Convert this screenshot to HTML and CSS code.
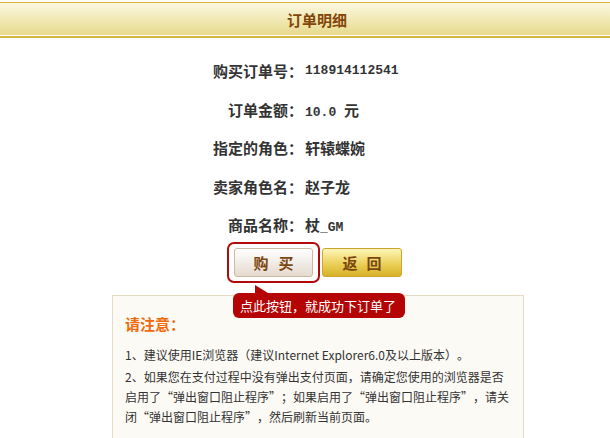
FILE: index.html
```html
<!DOCTYPE html>
<html lang="zh-CN">
<head>
<meta charset="utf-8">
<title>订单明细</title>
<link rel="stylesheet" href="styles.css">
</head>
<body>
<div class="header"><span class="title">订单明细</span></div>

<div class="details">
  <div class="label">购买订单号：</div><div class="value mono">118914112541</div>
  <div class="label">订单金额：</div><div class="value"><span class="mono">10.0 </span>元</div>
  <div class="label">指定的角色：</div><div class="value">轩辕蝶婉</div>
  <div class="label">卖家角色名：</div><div class="value">赵子龙</div>
  <div class="label">商品名称：</div><div class="value">杖<span class="mono">_GM</span></div>
</div>

<div class="actions">
  <div class="buy-wrap">
    <button class="btn btn-buy">购买</button>
    <div class="tip"><span class="tip-arrow"></span>点此按钮，就成功下订单了</div>
  </div>
  <button class="btn btn-back">返回</button>
</div>

<div class="notice">
  <div class="notice-title">请注意：</div>
  <p class="first">1、建议使用IE浏览器（建议Internet Explorer6.0及以上版本）。</p>
  <p>2、如果您在支付过程中没有弹出支付页面，请确定您使用的浏览器是否启用了<span class="qo">“</span>弹出窗口阻止程序<span class="qc">”</span>；如果启用了<span class="qo">“</span>弹出窗口阻止程序<span class="qc">”</span>，请关闭<span class="qo">“</span>弹出窗口阻止程序<span class="qc">”</span>，然后刷新当前页面。</p>
</div>
</body>
</html>
```

FILE: styles.css
```css
html, body {
  margin: 0;
  padding: 0;
  background: #ffffff;
}
body {
  font-family: "Noto Sans CJK SC", "Liberation Sans", sans-serif;
  color: #333333;
  overflow: hidden;
  text-spacing-trim: space-all;
}

.header {
  margin-top: 2px;
  border-top: 1px solid #d6b73c;
  border-bottom: 2px solid #d6b73c;
  padding-bottom: 1px;
  height: 32px;
  line-height: 32px;
  text-align: center;
  background: linear-gradient(#fbf8e0, #e7da8c) content-box;
}
.title {
  margin-left: 24px;
  font-size: 15px;
  font-weight: bold;
  color: #834608;
}

.details {
  margin-top: 13.5px;
  display: grid;
  grid-template-columns: 303px auto;
  column-gap: 2px;
  grid-auto-rows: 38.5px;
  align-items: center;
  font-size: 15px;
  font-weight: bold;
}
.label {
  text-align: right;
  color: #333333;
}
.value {
  color: #333333;
}
.mono {
  font-family: "Liberation Mono", monospace;
  font-size: 13px;
}

.actions {
  margin-top: -2px;
  padding-left: 227px;
  display: flex;
  align-items: center;
  gap: 2px;
}
.buy-wrap {
  position: relative;
  border: 2px solid #b20a0a;
  border-radius: 7px;
  padding: 4px 5px;
  background: #ffffff;
}
.btn {
  display: block;
  height: 29px;
  margin: 0;
  padding: 0 0 0 10px;
  font-family: "Noto Sans CJK SC", sans-serif;
  font-size: 15px;
  font-weight: bold;
  letter-spacing: 10px;
  color: #7a4711;
  border-radius: 3px;
  box-sizing: border-box;
}
.btn-buy {
  width: 79px;
  border: 1px solid #cbbba6;
  background: linear-gradient(#ffffff, #e5dace);
}
.btn-back {
  width: 80px;
  letter-spacing: 9px;
  padding-left: 9px;
  border: 1px solid #cda42e;
  background: linear-gradient(#fff6b8, #e9cd52 60%, #d6b128);
}

.tip {
  position: absolute;
  left: 4px;
  top: 49px;
  width: 172px;
  height: 25px;
  line-height: 25px;
  box-sizing: border-box;
  padding-left: 7px;
  background: #b50404;
  border-radius: 6px;
  color: #ffffff;
  font-size: 13px;
  white-space: nowrap;
  z-index: 2;
}
.tip-arrow {
  position: absolute;
  left: 22px;
  top: -8px;
  width: 0;
  height: 0;
  border-bottom: 8px solid #b50404;
  border-right: 13px solid transparent;
}

.notice {
  margin-top: 12px;
  margin-left: 112px;
  width: 412px;
  min-height: 160px;
  box-sizing: border-box;
  border: 1px solid #e6dcc5;
  background: #fcfaf5;
  padding: 18px 11px 0 12px;
}
.notice-title {
  font-size: 15px;
  font-weight: bold;
  line-height: 20px;
  color: #f06a0c;
}
.notice p {
  margin: 0;
  font-size: 12px;
  line-height: 20px;
  color: #333333;
}
.notice p.first {
  margin-top: 11px;
  margin-bottom: 2px;
}
.qo, .qc {
  display: inline-block;
  width: 1em;
  line-height: 1;
}
.qo {
  text-align: right;
}
.qc {
  text-align: left;
}
```
